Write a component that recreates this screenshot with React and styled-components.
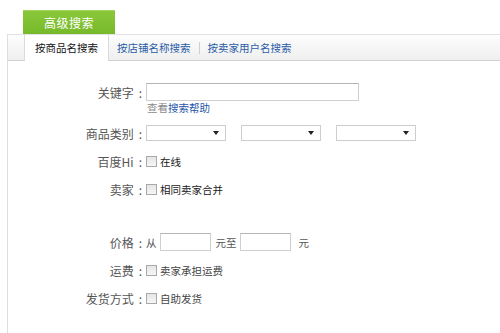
import React from "react";
import styled, { createGlobalStyle } from "styled-components";

const Global = createGlobalStyle`
  html, body { margin: 0; padding: 0; background: #fff; }
  body { font-family: "Noto Sans CJK SC", "Noto Sans", sans-serif; font-size: 12px; color: #555; }
`;

const Page = styled.div`
  width: 500px;
  height: 333px;
  padding-top: 10px;
  box-sizing: border-box;
  overflow: hidden;
`;

const GreenTab = styled.div`
  margin-left: 23px;
  width: 92px;
  height: 24px;
  box-sizing: border-box;
  background: linear-gradient(#8ac83a, #76b92a);
  border-top: 1px solid #a2d45c;
  color: #fff;
  font-size: 12px;
  line-height: 23px;
  text-align: center;
  letter-spacing: 0.5px;
`;

const Panel = styled.div`
  margin-left: 7px;
  border-left: 1px solid #dedede;
  height: 300px;
`;

const TabBar = styled.div`
  display: flex;
  align-items: stretch;
  height: 25px;
  border-top: 1px solid #e2e2e2;
  border-bottom: 1px solid #d2d2d2;
  background: linear-gradient(#fdfdfd, #efefef);
  padding-left: 16px;
`;

const Tab = styled.div`
  display: flex;
  align-items: center;
  font-size: 10.5px;
  padding: 0 ${(p) => (p.$active ? 10 : 8)}px;
  color: ${(p) => (p.$active ? "#111" : "#2a5ca6")};
  ${(p) =>
    p.$active &&
    `
    background: #fff;
    border-left: 1px solid #dadada;
    border-right: 1px solid #dadada;
    margin-bottom: -1px;
    padding-bottom: 1px;
  `}
`;

const Sep = styled.div`
  width: 1px;
  height: 12px;
  background: #cfcfcf;
  align-self: center;
`;

const Form = styled.div`
  padding-top: 22px;
`;

const Row = styled.div`
  display: flex;
  align-items: center;
  height: ${(p) => p.$h || 28}px;
`;

const Label = styled.div`
  width: 138px;
  text-align: right;
  font-size: 12px;
  color: #555;
  white-space: nowrap;
`;

const Colon = styled.span`
  margin: 0 4px 0 5px;
`;

const TextInput = styled.div`
  width: ${(p) => p.$w}px;
  height: 18px;
  box-sizing: border-box;
  border: 1px solid #cfcfcf;
  border-top-color: #b5b5b5;
  background: #fff;
`;

const Help = styled.div`
  padding-left: 139px;
  font-size: 10.5px;
  line-height: 14px;
  height: 18px;
  color: #8a8a8a;
`;

const Link = styled.span`
  color: #1f56a8;
`;

const SelectBox = styled.div`
  position: relative;
  width: 80px;
  height: 16px;
  box-sizing: border-box;
  border: 1px solid #cdcdcd;
  background: #fff;
  margin-right: 15px;
`;

const Arrow = styled.span`
  position: absolute;
  right: 6px;
  top: 5px;
  border-left: 3px solid transparent;
  border-right: 3px solid transparent;
  border-top: 4px solid #222;
`;

const Check = styled.span`
  width: 9px;
  height: 9px;
  border: 1px solid #a9a9a9;
  background: linear-gradient(#e6e6e6, #f6f6f6);
  margin-right: 3px;
`;

const Opt = styled.span`
  font-size: 10.5px;
  color: ${(p) => (p.$dark ? "#1a1a1a" : "#444")};
`;

const Unit = styled.span`
  font-size: 10.5px;
  color: #555;
  margin: ${(p) => p.$m};
`;

const Select = () => (
  <SelectBox>
    <Arrow />
  </SelectBox>
);

const LabelText = ({ children }) => (
  <Label>
    {children}
    <Colon>:</Colon>
  </Label>
);

export default function App() {
  return (
    <>
      <Global />
      <Page>
        <GreenTab>高级搜索</GreenTab>
        <Panel>
          <TabBar>
            <Tab $active>按商品名搜索</Tab>
            <Tab>按店铺名称搜索</Tab>
            <Sep />
            <Tab>按卖家用户名搜索</Tab>
          </TabBar>
          <Form>
            <Row $h={18}>
              <LabelText>关键字</LabelText>
              <TextInput $w={213} />
            </Row>
            <Help>
              查看<Link>搜索帮助</Link>
            </Help>
            <Row>
              <LabelText>商品类别</LabelText>
              <Select />
              <Select />
              <Select />
            </Row>
            <Row>
              <LabelText>百度Hi</LabelText>
              <Check />
              <Opt $dark>在线</Opt>
            </Row>
            <Row>
              <LabelText>卖家</LabelText>
              <Check />
              <Opt $dark>相同卖家合并</Opt>
            </Row>
            <Row $h={25} />
            <Row>
              <LabelText>价格</LabelText>
              <Unit $m="0 3px 0 0">从</Unit>
              <TextInput $w={51} />
              <Unit $m="0 3px 0 5px">元至</Unit>
              <TextInput $w={51} />
              <Unit $m="0 0 0 8px">元</Unit>
            </Row>
            <Row>
              <LabelText>运费</LabelText>
              <Check />
              <Opt>卖家承担运费</Opt>
            </Row>
            <Row>
              <LabelText>发货方式</LabelText>
              <Check />
              <Opt>自助发货</Opt>
            </Row>
          </Form>
        </Panel>
      </Page>
    </>
  );
}
